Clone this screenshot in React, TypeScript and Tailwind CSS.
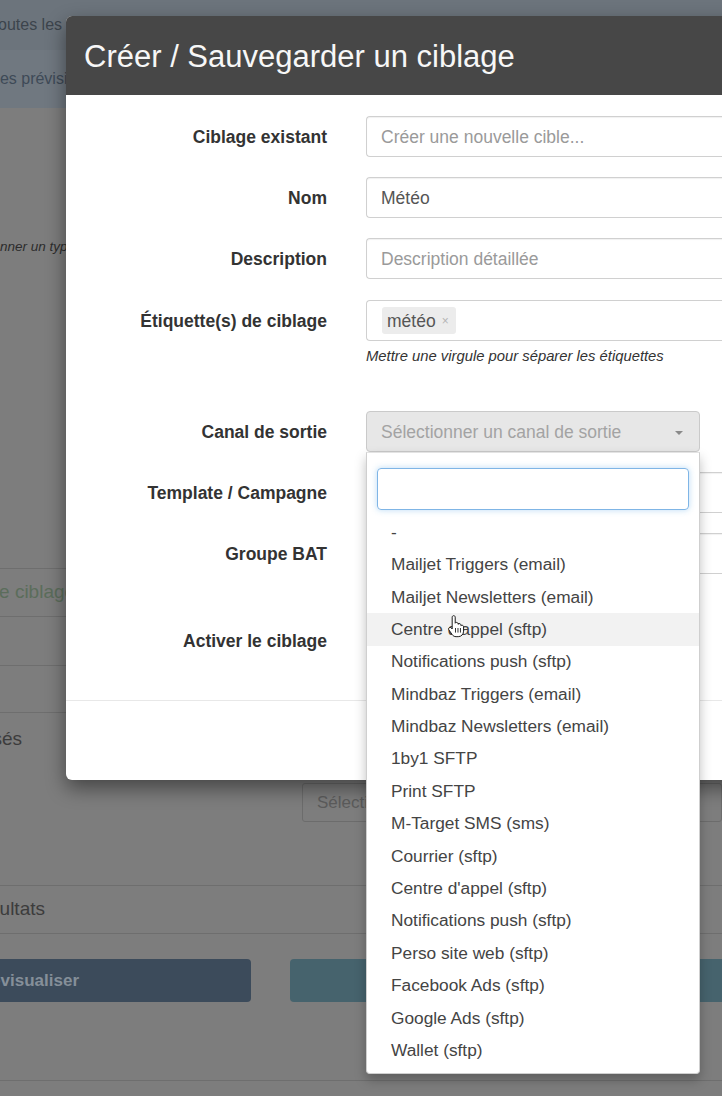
import React from "react";

// -------------------------------------------------------
// DATA
// -------------------------------------------------------

const channels = [
  "-",
  "Mailjet Triggers (email)",
  "Mailjet Newsletters (email)",
  "Centre d'appel (sftp)",
  "Notifications push (sftp)",
  "Mindbaz Triggers (email)",
  "Mindbaz Newsletters (email)",
  "1by1 SFTP",
  "Print SFTP",
  "M-Target SMS (sms)",
  "Courrier (sftp)",
  "Centre d'appel (sftp)",
  "Notifications push (sftp)",
  "Perso site web (sftp)",
  "Facebook Ads (sftp)",
  "Google Ads (sftp)",
  "Wallet (sftp)",
];

// -------------------------------------------------------
// ICONS
// -------------------------------------------------------

const HandCursor = () => (
  <svg viewBox="0 0 20 24" className="w-[19px] h-[23px]">
    <path
      d="M6.5 2.2c0-.9.7-1.6 1.6-1.6s1.6.7 1.6 1.6v6.3c.3-.5.8-.8 1.4-.8.9 0 1.6.7 1.6 1.6v.4c.3-.4.8-.7 1.4-.7.9 0 1.6.7 1.6 1.6v.6c.3-.3.7-.5 1.2-.5.9 0 1.6.7 1.6 1.6v4.6c0 3.3-2.4 5.8-5.6 5.8h-2.3c-1.8 0-3.2-.8-4.2-2.3L3 15.5c-.5-.8-.3-1.8.5-2.3.7-.4 1.6-.3 2.1.3l.9 1.1V2.2z"
      fill="#fff"
      stroke="#111"
      strokeWidth="1"
      strokeLinejoin="round"
    />
    <path d="M10 14v4M12.6 14v4M15.2 14v4" stroke="#111" strokeWidth="0.9" strokeLinecap="round" />
  </svg>
);

// -------------------------------------------------------
// BACKGROUND PAGE (dimmed by the modal backdrop)
// -------------------------------------------------------

// text that is cut by the left edge of the window, ending at a given x
function EdgeText({ width, className, children }: { width: string; className: string; children: React.ReactNode }) {
  return (
    <div className={`${width} flex justify-end shrink-0`}>
      <span className={`whitespace-nowrap ${className}`}>{children}</span>
    </div>
  );
}

function BackgroundPage() {
  return (
    <div className="flex flex-col w-full">
      {/* top info band */}
      <div className="h-[108px] bg-[#6c747c] flex flex-col">
        <div className="h-[50px] flex items-center">
          <span className="-ml-[10px] text-[16px] text-[#3c444c] whitespace-nowrap">Toutes les campagnes</span>
        </div>
        <div className="h-[58px] bg-[#707880] flex items-center">
          <span className="-ml-[9px] text-[16px] text-[#3e4a57] whitespace-nowrap">Les prévisions</span>
        </div>
      </div>

      {/* filters area */}
      <div className="h-[460px] pt-[129px]">
        <span className="block -ml-[48px] text-[13.5px] italic text-[#2c2c2c] whitespace-nowrap">Sélectionner un type</span>
      </div>

      <div className="h-[48px] border-t border-[#6e6e6e] flex items-center">
        <span className="-ml-[58px] text-[19px] text-[#5b6d5b] whitespace-nowrap">Type de ciblage</span>
      </div>
      <div className="h-[49px] border-t border-[#6e6e6e]" />
      <div className="h-[47px] border-t border-[#6e6e6e]" />
      <div className="h-[52px] border-t border-[#6e6e6e] flex items-center pt-[2px]">
        <EdgeText width="w-[22px]" className="text-[19px] text-[#3c3c3c]">Critères utilisés</EdgeText>
      </div>

      <div className="h-[121px] pt-[19px] pl-[302px]">
        <div className="h-[39px] border border-[#6c6c6c] rounded-[3px] flex items-center pl-[14px]">
          <span className="text-[17px] text-[#5c5c5c]">Sélectionner...</span>
        </div>
      </div>

      <div className="h-[48px] border-t border-[#6e6e6e] flex items-center">
        <EdgeText width="w-[45px]" className="text-[19px] text-[#3c3c3c]">Résultats</EdgeText>
      </div>

      <div className="h-[147px] border-t border-[#6e6e6e] pt-[25px] flex gap-[39px]">
        <div className="w-[251px] h-[43px] bg-[#3c4b5b] rounded-r-[4px] flex items-center shrink-0">
          <EdgeText width="w-[79px]" className="text-[17px] font-bold text-[#858f99]">Prévisualiser</EdgeText>
        </div>
        <div className="flex-1 h-[43px] bg-[#46636d] rounded-l-[4px]" />
      </div>

      <div className="border-t border-[#6e6e6e] h-[16px]" />
    </div>
  );
}

// -------------------------------------------------------
// FORM PARTS
// -------------------------------------------------------

function Label({ children }: { children: React.ReactNode }) {
  return (
    <div className="w-[261px] shrink-0 pt-[2px] text-right text-[17.5px] font-bold text-[#333]">{children}</div>
  );
}

function TextInput({ value, placeholder }: { value?: string; placeholder?: string }) {
  return (
    <div className="h-[41px] flex-1 border border-[#d0d0d0] rounded-l-[4px] border-r-0 flex items-center pl-[14px] pt-[2px] shadow-[inset_0_1px_1px_rgba(0,0,0,0.06)]">
      {value ? (
        <span className="text-[17.5px] text-[#555]">{value}</span>
      ) : (
        <span className="text-[17.5px] text-[#9a9a9a]">{placeholder}</span>
      )}
    </div>
  );
}

function ChannelDropdown() {
  return (
    <div className="absolute top-full left-0 w-full bg-white border border-[#cfcfcf] border-t-[#e3e3e3] rounded-b-[4px] shadow-[0_6px_12px_rgba(0,0,0,0.25)] z-20">
      <div className="pt-[15px] px-[10px]">
        <div className="h-[42px] rounded-[4px] border border-[#7fb5e6] shadow-[0_0_6px_rgba(102,175,233,0.45)]" />
      </div>
      <ul className="pt-[6px] pb-[6px]">
        {channels.map((c, i) => (
          <li
            key={i}
            className={`relative h-[32.4px] flex items-center pl-[24px] pt-[1px] text-[17.3px] text-[#444] ${i === 3 ? "bg-[#f2f2f2]" : ""}`}
          >
            {c}
            {i === 3 && (
              <span className="absolute left-[79px] top-[2px]">
                <HandCursor />
              </span>
            )}
          </li>
        ))}
      </ul>
    </div>
  );
}

// -------------------------------------------------------
// MODAL
// -------------------------------------------------------

function Modal() {
  return (
    <div className="absolute left-[66px] top-[16px] w-[680px] rounded-l-[6px] bg-white shadow-[0_8px_20px_rgba(0,0,0,0.45)] z-10">
      <div className="h-[79px] bg-[#474747] rounded-tl-[6px] flex items-center pl-[18px] pt-[3px]">
        <h1 className="text-[31px] text-[#f7f7f7] whitespace-nowrap">Créer / Sauvegarder un ciblage</h1>
      </div>

      <div className="pt-[21px] flex flex-col">
        <div className="flex items-center gap-[39px] mb-[20px]">
          <Label>Ciblage existant</Label>
          <TextInput placeholder="Créer une nouvelle cible..." />
        </div>
        <div className="flex items-center gap-[39px] mb-[20px]">
          <Label>Nom</Label>
          <TextInput value="Météo" />
        </div>
        <div className="flex items-center gap-[39px] mb-[21px]">
          <Label>Description</Label>
          <TextInput placeholder="Description détaillée" />
        </div>
        <div className="flex items-start gap-[39px] mb-[46px]">
          <div className="h-[41px] flex items-center">
            <Label>Étiquette(s) de ciblage</Label>
          </div>
          <div className="flex-1 flex flex-col">
            <div className="h-[41px] border border-[#d0d0d0] border-r-0 rounded-l-[4px] flex items-center pl-[15px]">
              <span className="h-[27px] bg-[#ececec] rounded-[3px] flex items-center gap-[6px] pl-[5px] pr-[7px] pt-[1px]">
                <span className="text-[17.5px] text-[#555]">météo</span>
                <span className="text-[12px] text-[#b5b5b5]">×</span>
              </span>
            </div>
            <p className="mt-[6px] text-[14.8px] leading-[18px] italic text-[#333] whitespace-nowrap">
              Mettre une virgule pour séparer les étiquettes
            </p>
          </div>
        </div>

        <div className="flex items-center gap-[39px] mb-[20px]">
          <Label>Canal de sortie</Label>
          <div className="relative w-[334px] h-[41px]">
            <div className="h-full bg-[#e7e7e7] border border-[#cacaca] rounded-[4px] flex items-center justify-between pl-[14px] pr-[16px] pt-[2px]">
              <span className="text-[17.5px] text-[#a3a3a3]">Sélectionner un canal de sortie</span>
              <span className="w-0 h-0 border-l-[4px] border-r-[4px] border-t-[4px] border-l-transparent border-r-transparent border-t-[#8a8a8a]" />
            </div>
            <ChannelDropdown />
          </div>
        </div>
        <div className="flex items-center gap-[39px] mb-[20px]">
          <Label>Template / Campagne</Label>
          <TextInput placeholder="" />
        </div>
        <div className="flex items-center gap-[39px] mb-[46px]">
          <Label>Groupe BAT</Label>
          <TextInput placeholder="" />
        </div>
        <div className="flex items-center gap-[39px] h-[40px] mb-[40px]">
          <Label>Activer le ciblage</Label>
        </div>

        <div className="h-[80px] border-t border-[#e8e8e8]" />
      </div>
    </div>
  );
}

// -------------------------------------------------------
// APP
// -------------------------------------------------------

export default function App() {
  return (
    <div className="relative w-[722px] h-[1096px] overflow-hidden bg-[#7d7d7d] font-['Liberation_Sans',Arial,sans-serif]">
      <BackgroundPage />
      <Modal />
    </div>
  );
}
